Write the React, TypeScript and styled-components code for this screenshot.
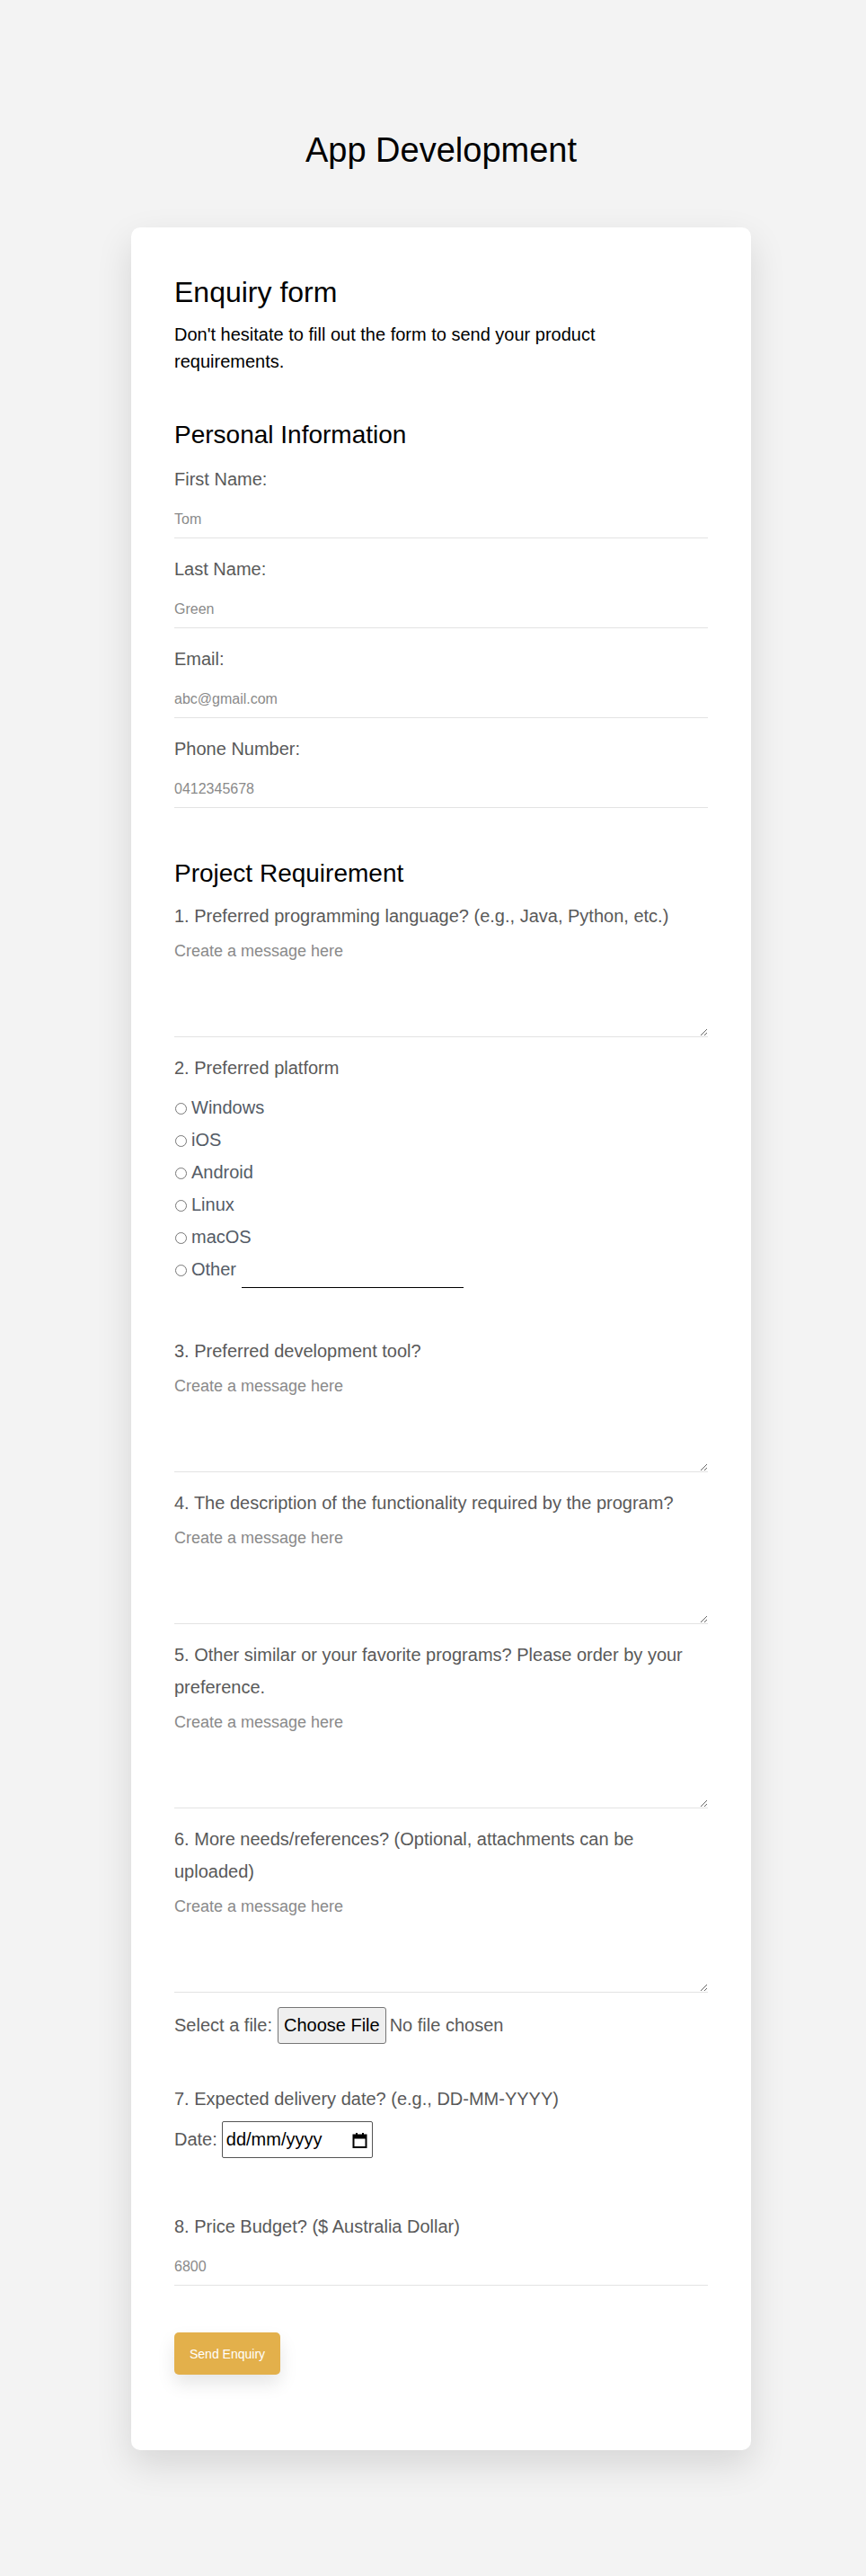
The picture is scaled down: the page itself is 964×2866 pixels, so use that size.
import styled, { createGlobalStyle } from 'styled-components';

const GlobalStyle = createGlobalStyle`
  body {
    margin: 0;
    background: #f3f3f3;
    font-family: "Liberation Sans", Arial, sans-serif;
  }
  * {
    box-sizing: border-box;
  }
`;

const Page = styled.div`
  padding: 145px 0 140px 18px;
`;

const Title = styled.h1`
  margin: 0 0 62px;
  font-size: 38px;
  font-weight: 400;
  line-height: 1.2;
  text-align: center;
  color: #000;
`;

const Card = styled.form`
  display: flex;
  flex-direction: column;
  width: 690px;
  margin: 0 auto;
  padding: 53px 48px 84px;
  background: #fff;
  border-radius: 10px;
  box-shadow: 0 16px 40px rgba(0, 0, 0, 0.12);
`;

const FormTitle = styled.h2`
  margin: 0;
  font-size: 32px;
  font-weight: 400;
  line-height: 1.2;
  color: #000;
`;

const Intro = styled.p`
  margin: 13px 0 0;
  font-size: 20px;
  line-height: 30px;
  color: #000;
`;

const SectionTitle = styled.h3<{ $top: number; $bottom: number }>`
  margin: ${(p) => p.$top}px 0 ${(p) => p.$bottom}px;
  font-size: 28px;
  font-weight: 400;
  line-height: 1.2;
  color: #000;
`;

const Field = styled.div`
  margin-bottom: 16px;
`;

const Label = styled.label`
  display: block;
  font-size: 20px;
  line-height: 36px;
  color: #595959;
`;

const LineInput = styled.input`
  display: block;
  width: 100%;
  height: 41px;
  margin-top: 7px;
  padding: 10px 0;
  border: none;
  border-bottom: 1px solid #e3e3e3;
  font-family: inherit;
  font-size: 16px;
  line-height: 20px;
  color: #333;
  outline: none;

  &::placeholder {
    color: #8a8a8a;
  }
`;

const Message = styled.textarea`
  display: block;
  width: 100%;
  height: 117px;
  padding: 10px 0;
  border: none;
  border-bottom: 1px solid #e3e3e3;
  font-family: inherit;
  font-size: 18px;
  line-height: 22px;
  color: #333;
  outline: none;

  &::placeholder {
    color: #8a8a8a;
  }
`;

const RadioGroup = styled.div`
  margin: 8px 0 39px;
`;

const RadioRow = styled.label`
  display: flex;
  align-items: center;
  height: 36px;
  font-size: 20px;
  color: #545b66;
`;

const Radio = styled.input`
  width: 13px;
  height: 13px;
  margin: 2px 5px 0 1px;
`;

const OtherInput = styled.input`
  align-self: flex-start;
  width: 247px;
  height: 24px;
  margin: 15px 0 0 6px;
  padding: 0;
  border: none;
  border-bottom: 1px solid #000;
  font-family: inherit;
  font-size: 16px;
  outline: none;
`;

const InlineRow = styled.div<{ $top: number; $bottom: number }>`
  display: flex;
  align-items: center;
  height: 41px;
  margin: ${(p) => p.$top}px 0 ${(p) => p.$bottom}px;
  font-size: 20px;
  color: #595959;
`;

const FileInput = styled.input`
  margin-left: 6px;
  font-family: inherit;
  font-size: 20px;
  color: #595959;

  &::file-selector-button {
    height: 41px;
    margin-right: 4px;
    padding: 0 6px;
    border: 1px solid #767676;
    border-radius: 3px;
    background: #efefef;
    font-family: inherit;
    font-size: 20px;
    color: #000;
  }
`;

const DateBox = styled.div`
  display: flex;
  align-items: center;
  width: 168px;
  height: 41px;
  margin-left: 5px;
  padding: 0 5px 0 4px;
  border: 1px solid #555;
  border-radius: 2px;
`;

const DateText = styled.input`
  flex: 1;
  min-width: 0;
  padding: 0;
  border: none;
  font-family: inherit;
  font-size: 20px;
  color: #000;
  outline: none;

  &::placeholder {
    color: #000;
  }
`;

const SendButton = styled.button`
  align-self: flex-start;
  height: 47px;
  margin-top: 52px;
  padding: 0 17px;
  border: none;
  border-radius: 5px;
  background: #e3b04b;
  box-shadow: 0 10px 20px rgba(0, 0, 0, 0.1);
  font-family: inherit;
  font-size: 14px;
  color: #fff;
  cursor: pointer;
`;

const CalendarIcon = () => (
  <svg width="17" height="18" viewBox="0 0 17 18">
    <rect x="1.5" y="3.5" width="14" height="13.5" fill="none" stroke="#000" strokeWidth="2" />
    <rect x="1.5" y="3.5" width="14" height="4" fill="#000" />
    <rect x="4" y="1" width="2" height="3" fill="#000" />
    <rect x="11" y="1" width="2" height="3" fill="#000" />
  </svg>
);

const personal = [
  { id: 'first', label: 'First Name:', placeholder: 'Tom' },
  { id: 'last', label: 'Last Name:', placeholder: 'Green' },
  { id: 'email', label: 'Email:', placeholder: 'abc@gmail.com' },
  { id: 'phone', label: 'Phone Number:', placeholder: '0412345678' },
];

const platforms = ['Windows', 'iOS', 'Android', 'Linux', 'macOS'];

const Question = ({ id, text }: { id: string; text: string }) => (
  <Field>
    <Label htmlFor={id}>{text}</Label>
    <Message id={id} placeholder="Create a message here" />
  </Field>
);

export default function App() {
  return (
    <>
      <GlobalStyle />
      <Page>
        <Title>App Development</Title>
        <Card onSubmit={(e) => e.preventDefault()}>
          <FormTitle>Enquiry form</FormTitle>
          <Intro>Don't hesitate to fill out the form to send your product requirements.</Intro>

          <SectionTitle $top={50} $bottom={14}>Personal Information</SectionTitle>
          {personal.map((f) => (
            <Field key={f.id}>
              <Label htmlFor={f.id}>{f.label}</Label>
              <LineInput id={f.id} placeholder={f.placeholder} />
            </Field>
          ))}

          <SectionTitle $top={40} $bottom={13}>Project Requirement</SectionTitle>
          <Question id="q1" text="1. Preferred programming language? (e.g., Java, Python, etc.)" />

          <Field>
            <Label>2. Preferred platform</Label>
            <RadioGroup>
              {platforms.map((p) => (
                <RadioRow key={p}>
                  <Radio type="radio" name="platform" value={p} />
                  {p}
                </RadioRow>
              ))}
              <RadioRow>
                <Radio type="radio" name="platform" value="Other" />
                Other
                <OtherInput type="text" />
              </RadioRow>
            </RadioGroup>
          </Field>

          <Question id="q3" text="3. Preferred development tool?" />
          <Question id="q4" text="4. The description of the functionality required by the program?" />
          <Question id="q5" text="5. Other similar or your favorite programs? Please order by your preference." />
          <Question id="q6" text="6. More needs/references? (Optional, attachments can be uploaded)" />

          <InlineRow $top={0} $bottom={43}>
            Select a file:
            <FileInput type="file" />
          </InlineRow>

          <Label>7. Expected delivery date? (e.g., DD-MM-YYYY)</Label>
          <InlineRow $top={7} $bottom={58}>
            Date:
            <DateBox>
              <DateText type="text" placeholder="dd/mm/yyyy" />
              <CalendarIcon />
            </DateBox>
          </InlineRow>

          <Label htmlFor="budget">8. Price Budget? ($ Australia Dollar)</Label>
          <LineInput id="budget" placeholder="6800" />

          <SendButton type="submit">Send Enquiry</SendButton>
        </Card>
      </Page>
    </>
  );
}
